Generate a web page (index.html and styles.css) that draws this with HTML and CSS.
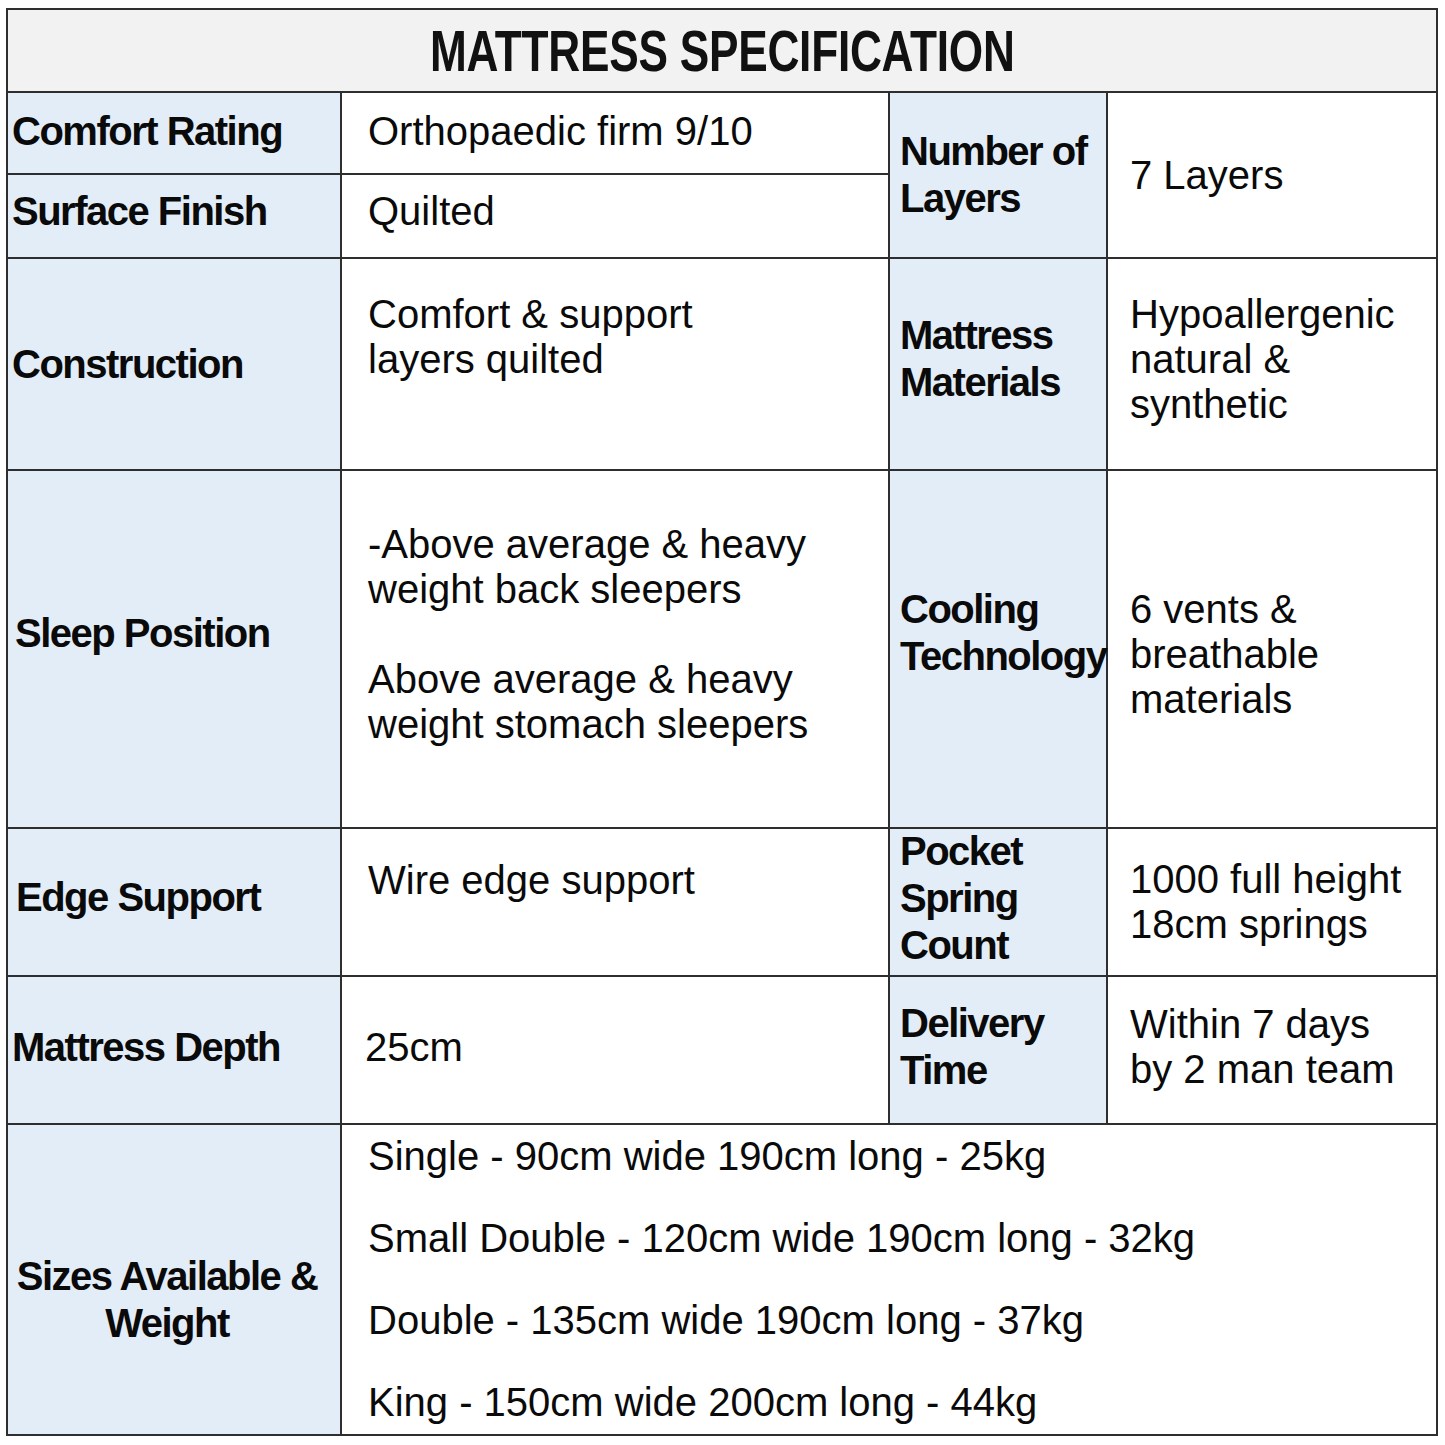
FILE: index.html
```html
<!DOCTYPE html>
<html lang="en">
<head>
<meta charset="utf-8">
<title>Mattress Specification</title>
<link rel="stylesheet" href="styles.css">
</head>
<body>
<div class="spec">
  <div class="title"><span class="title-text">MATTRESS SPECIFICATION</span></div>

  <div class="cell label r-a1">Comfort Rating</div>
  <div class="cell value r-a1 v-comfort">Orthopaedic firm 9/10</div>
  <div class="cell label2 r-a">Number of<br>Layers</div>
  <div class="cell value2 r-a">7 Layers</div>

  <div class="cell label r-a2 l-surface">Surface Finish</div>
  <div class="cell value r-a2 v-surface">Quilted</div>

  <div class="cell label r-b">Construction</div>
  <div class="cell value r-b top v-construction">Comfort &amp; support<br>layers quilted</div>
  <div class="cell label2 r-b up5">Mattress<br>Materials</div>
  <div class="cell value2 r-b up5">Hypoallergenic<br>natural &amp;<br>synthetic</div>

  <div class="cell label r-c l-sleep">Sleep Position</div>
  <div class="cell value r-c v-sleep">
    <p>-Above average &amp; heavy<br>weight back sleepers</p>
    <p>Above average &amp; heavy<br>weight stomach sleepers</p>
  </div>
  <div class="cell label2 r-c l-cooling">Cooling<br>Technology</div>
  <div class="cell value2 r-c v-cooling">6 vents &amp;<br>breathable<br>materials</div>

  <div class="cell label r-d l-edge">Edge Support</div>
  <div class="cell value r-d top v-wire">Wire edge support</div>
  <div class="cell label2 r-d l-pocket">Pocket<br>Spring<br>Count</div>
  <div class="cell value2 r-d">1000 full height<br>18cm springs</div>

  <div class="cell label r-e up3">Mattress Depth</div>
  <div class="cell value r-e up3 v-depth">25cm</div>
  <div class="cell label2 r-e up3">Delivery<br>Time</div>
  <div class="cell value2 r-e up3">Within 7 days<br>by 2 man team</div>

  <div class="cell label r-f l-sizes">Sizes Available &amp;<br>Weight</div>
  <div class="cell value sizes r-f">
    <span>Single - 90cm wide 190cm long - 25kg</span>
    <span>Small Double - 120cm wide 190cm long - 32kg</span>
    <span>Double - 135cm wide 190cm long - 37kg</span>
    <span>King - 150cm wide 200cm long - 44kg</span>
  </div>
</div>
</body>
</html>
```

FILE: styles.css
```css
html, body {
  margin: 0;
  padding: 0;
  background: #ffffff;
}

body {
  font-family: "Liberation Sans", Arial, sans-serif;
  color: #0a0a0a;
}

.spec {
  margin: 8px 0 0 6px;
  width: 1432px;
  box-sizing: border-box;
  border-top: 2px solid #2e2e2e;
  border-left: 2px solid #2e2e2e;
  display: grid;
  grid-template-columns: 334px 548px 218px 330px;
  grid-template-rows: 83px 82px 84px 212px 358px 148px 148px 311px;
}

.title {
  grid-column: 1 / 5;
  grid-row: 1;
  background: #f2f2f2;
  border-right: 2px solid #2e2e2e;
  border-bottom: 2px solid #2e2e2e;
  display: flex;
  align-items: center;
  justify-content: center;
  box-sizing: border-box;
  overflow: hidden;
}

.title-text {
  display: inline-block;
  font-family: "Liberation Sans", Arial, sans-serif;
  font-weight: 700;
  font-size: 57px;
  line-height: 1;
  letter-spacing: -0.3px;
  color: #111;
  transform: scaleX(0.775);
  white-space: nowrap;
  margin-top: 2px;
}

.cell {
  box-sizing: border-box;
  border-right: 2px solid #2e2e2e;
  border-bottom: 2px solid #2e2e2e;
  display: flex;
  flex-direction: column;
  justify-content: center;
}

.label, .label2 {
  background: #e3edf7;
  font-weight: 700;
  font-size: 40px;
  line-height: 47px;
  letter-spacing: -1.5px;
}

.label {
  grid-column: 1;
  padding-left: 4px;
}

.label2 {
  grid-column: 3;
  padding-left: 10px;
}

.value, .value2 {
  background: #ffffff;
  font-size: 40px;
  line-height: 45px;
}

.value {
  grid-column: 2;
  padding-left: 26px;
}

.value2 {
  grid-column: 4;
  padding-left: 22px;
}

.value p {
  margin: 0;
}

.value p + p {
  margin-top: 45px;
}

.top {
  justify-content: flex-start;
}

/* rows */
.r-a1 { grid-row: 2; }
.r-a2 { grid-row: 3; }
.r-a  { grid-row: 2 / 4; }
.r-b  { grid-row: 4; }
.r-c  { grid-row: 5; }
.r-d  { grid-row: 6; }
.r-e  { grid-row: 7; }
.r-f  { grid-row: 8; }

/* fine vertical adjustments */
.r-a1 { padding-bottom: 3px; }
.l-surface, .v-surface { padding-bottom: 10px; }
.v-construction { padding-top: 33px; }
.up5 { padding-bottom: 10px; }
.up3 { padding-bottom: 6px; }
.l-sleep { padding-bottom: 32px; padding-left: 7px; }
.v-sleep { padding-bottom: 30px; }
.l-cooling { padding-bottom: 32px; }
.v-cooling { padding-top: 10px; }
.l-edge { padding-bottom: 10px; padding-left: 8px; }
.v-wire { padding-top: 29px; }
.l-pocket { padding-bottom: 8px; }
.v-depth { padding-left: 23px; }

.l-sizes {
  text-align: center;
  padding: 40px 14px 0 0;
}

.sizes {
  grid-column: 2 / 5;
  justify-content: space-between;
  padding-top: 9px;
  padding-bottom: 9px;
}
```
